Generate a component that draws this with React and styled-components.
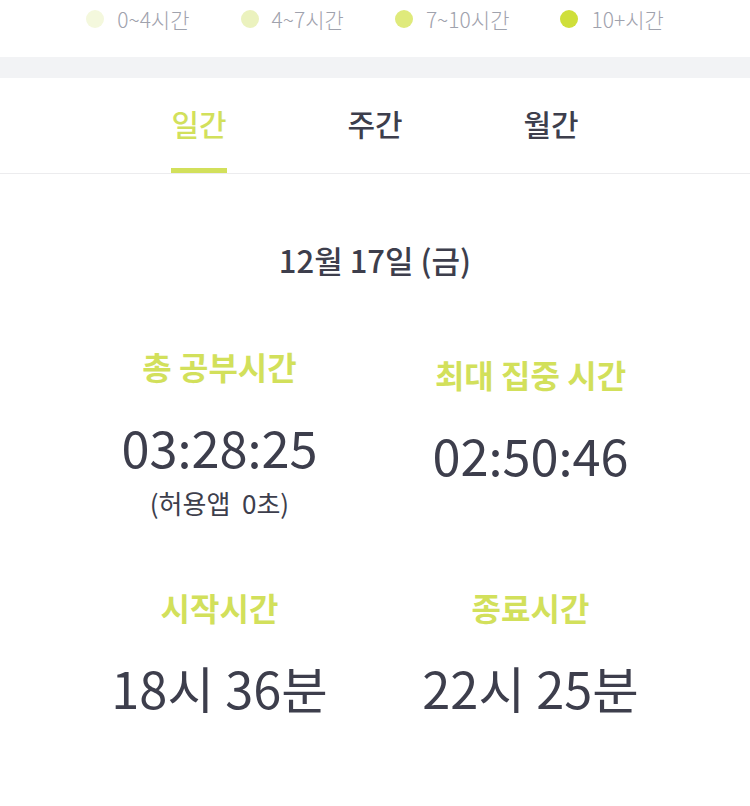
import React, { useState } from "react";
import styled, { createGlobalStyle } from "styled-components";

const GlobalStyle = createGlobalStyle`
  body {
    margin: 0;
    background: #ffffff;
    font-family: "Noto Sans CJK KR", "Noto Sans", sans-serif;
  }
`;

const legend = [
  { label: "0~4시간", color: "#f4f8dd" },
  { label: "4~7시간", color: "#ebf2be" },
  { label: "7~10시간", color: "#dfea7b" },
  { label: "10+시간", color: "#cfdf3a" },
];

const tabs = ["일간", "주간", "월간"];

const App = () => {
  const [active, setActive] = useState(0);
  return (
    <Page>
      <GlobalStyle />
      <Legend>
        {legend.map((item) => (
          <LegendItem key={item.label}>
            <Dot color={item.color} />
            <span>{item.label}</span>
          </LegendItem>
        ))}
      </Legend>
      <Divider />
      <Tabs>
        {tabs.map((t, i) => (
          <Tab key={t} active={i === active} onClick={() => setActive(i)}>
            <span className="tab-label">{t}</span>
          </Tab>
        ))}
      </Tabs>
      <Content>
        <DateTitle>12월 17일 (금)</DateTitle>
        <StatGrid>
          <Stat>
            <StatLabel>총 공부시간</StatLabel>
            <StatValue>03:28:25</StatValue>
            <StatSub>(허용앱&nbsp; 0초)</StatSub>
          </Stat>
          <Stat offset="8px">
            <StatLabel>최대 집중 시간</StatLabel>
            <StatValue>02:50:46</StatValue>
          </Stat>
          <Stat>
            <StatLabel>시작시간</StatLabel>
            <StatValue>18시 36분</StatValue>
          </Stat>
          <Stat>
            <StatLabel>종료시간</StatLabel>
            <StatValue>22시 25분</StatValue>
          </Stat>
        </StatGrid>
      </Content>
    </Page>
  );
};

const Page = styled.div`
  width: 750px;
  min-height: 806px;
  background: #ffffff;
`;

const Legend = styled.div`
  height: 57px;
  display: flex;
  justify-content: center;
  align-items: flex-start;
  padding-top: 4px;
  box-sizing: border-box;
  gap: 51px;
`;

const LegendItem = styled.div`
  display: flex;
  align-items: center;
  gap: 13px;
  font-size: 21px;
  font-weight: 300;
  color: #9fa2ad;
  line-height: 30px;
`;

const Dot = styled.i`
  width: 18px;
  height: 18px;
  border-radius: 50%;
  background: ${(props) => props.color};
`;

const Divider = styled.div`
  height: 21px;
  background: #f2f3f5;
`;

const Tabs = styled.div`
  height: 95px;
  display: flex;
  justify-content: center;
  border-bottom: 1px solid #ececee;
`;

const Tab = styled.div`
  width: 176px;
  display: flex;
  justify-content: center;
  cursor: pointer;
  .tab-label {
    display: flex;
    align-items: center;
    font-size: 30px;
    font-weight: 500;
    color: ${(props) => (props.active ? "#d2e05b" : "#3d3e4c")};
    border-bottom: 5px solid
      ${(props) => (props.active ? "#d2e05b" : "transparent")};
    box-sizing: border-box;
  }
`;

const Content = styled.div`
  padding-top: 62px;
  display: flex;
  flex-direction: column;
  align-items: center;
`;

const DateTitle = styled.h2`
  margin: 0;
  font-size: 31px;
  font-weight: 500;
  color: #3d3e4c;
  line-height: 48px;
`;

const StatGrid = styled.div`
  margin-top: 62px;
  display: grid;
  grid-template-columns: 311px 311px;
  row-gap: 66px;
`;

const Stat = styled.div`
  display: flex;
  flex-direction: column;
  align-items: center;
  padding-top: ${(props) => props.offset || "0"};
`;

const StatLabel = styled.div`
  font-size: 32px;
  font-weight: 700;
  color: #d2e05b;
  line-height: 40px;
`;

const StatValue = styled.div`
  margin-top: 20px;
  font-size: 50.5px;
  font-weight: 400;
  color: #3d3e4c;
  line-height: 80px;
`;

const StatSub = styled.div`
  margin-top: -1px;
  font-size: 26px;
  font-weight: 400;
  color: #3d3e4c;
  line-height: 36px;
`;

export default App;
